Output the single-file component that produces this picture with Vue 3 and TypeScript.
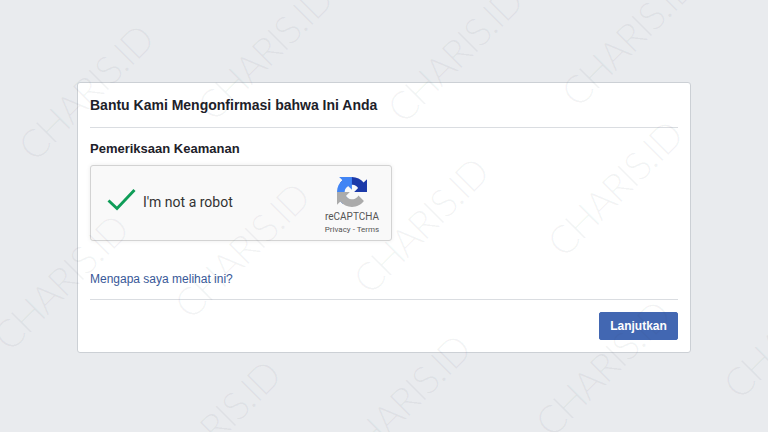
<script setup lang="ts">
const marks = [
  { x: 85, y: 92 }, { x: 264, y: 52 }, { x: 454, y: 54 }, { x: 628, y: 38 },
  { x: 60, y: 282 }, { x: 241, y: 250 }, { x: 420, y: 225 }, { x: 614, y: 188 },
  { x: 212, y: 428 }, { x: 402, y: 402 }, { x: 602, y: 368 }, { x: 790, y: 330 },
]
</script>

<template>
  <main class="page">
    <section class="card">
      <h1 class="title">Bantu Kami Mengonfirmasi bahwa Ini Anda</h1>
      <div class="body">
        <h2 class="label">Pemeriksaan Keamanan</h2>
        <div class="captcha">
          <svg class="check" viewBox="0 0 30 24" width="30" height="24">
            <path d="M1.5 12.5 L10 20.5 L27.5 2" fill="none" stroke="#0f9d58" stroke-width="2.9" />
          </svg>
          <span class="robot">I'm not a robot</span>
          <div class="brand">
            <svg class="logo" viewBox="0 0 64 64" width="30" height="30">
              <path fill="#1c3aa9" d="M64 31.955l-.033-1.37V4.687l-7.16 7.16C50.948 4.674 42.033.093 32.05.093c-10.4 0-19.622 4.96-25.458 12.64l11.736 11.86a15.55 15.55 0 0 1 4.754-5.334c2.05-1.6 4.952-2.906 8.968-2.906.485 0 .86.057 1.135.163 4.976.393 9.288 3.14 11.828 7.124l-8.307 8.307 32.285.001" />
              <path fill="#4285f4" d="M31.862 0l-1.37.033H4.594l7.16 7.16C4.58 13.052 0 21.967 0 31.95c0 10.4 4.96 19.622 12.64 25.458l11.86-11.736a15.55 15.55 0 0 1-5.334-4.754c-1.6-2.05-2.906-4.952-2.906-8.968 0-.485.057-.86.163-1.135.393-4.976 3.14-9.288 7.124-11.828l8.307 8.307L31.862 0" />
              <path fill="#ababab" d="M.001 32l.033 1.37v25.898l7.16-7.16c5.86 7.173 14.775 11.754 24.76 11.754 10.4 0 19.622-4.96 25.458-12.64l-11.736-11.86a15.55 15.55 0 0 1-4.754 5.334c-2.05 1.6-4.952 2.906-8.968 2.906-.485 0-.86-.057-1.135-.163-4.976-.393-9.288-3.14-11.828-7.124l8.307-8.307L.001 32" />
            </svg>
            <div class="brand-name">reCAPTCHA</div>
            <div class="brand-links">Privacy - Terms</div>
          </div>
        </div>
        <a class="why">Mengapa saya melihat ini?</a>
      </div>
      <footer class="foot">
        <button class="next">Lanjutkan</button>
      </footer>
    </section>
    <div class="marks">
      <span
        v-for="m in marks"
        :key="m.x + '-' + m.y"
        class="mark"
        :style="{ left: m.x + 'px', top: m.y + 'px' }"
      >CHARIS.ID</span>
    </div>
  </main>
</template>

<style scoped>
.page {
  width: 768px;
  height: 432px;
  padding-top: 82px;
  box-sizing: border-box;
  background: #e9ebee;
  font-family: "Liberation Sans", Arial, sans-serif;
  position: relative;
  overflow: hidden;
}
.card {
  width: 614px;
  height: 271px;
  box-sizing: border-box;
  margin: 0 auto;
  background: #fff;
  border: 1px solid #ccd0d5;
  border-radius: 3px;
  padding: 0 12px;
  display: flex;
  flex-direction: column;
}
.title {
  margin: 0;
  height: 44px;
  line-height: 44px;
  font-size: 14px;
  font-weight: bold;
  color: #1d2129;
  border-bottom: 1px solid #dadde1;
  box-sizing: content-box;
}
.body {
  flex: 1;
  display: flex;
  flex-direction: column;
}
.label {
  margin: 13px 0 8px;
  font-size: 13px;
  line-height: 16px;
  font-weight: bold;
  color: #1d2129;
}
.captcha {
  width: 302px;
  height: 76px;
  box-sizing: border-box;
  background: #f9f9f9;
  border: 1px solid #d3d3d3;
  border-radius: 3px;
  box-shadow: 0 0 4px rgba(0, 0, 0, 0.08);
  display: flex;
  align-items: center;
  padding: 0 7px 0 16px;
}
.check {
  flex: none;
  margin-bottom: 6px;
}
.robot {
  margin-left: 6px;
  margin-bottom: 2px;
  font-family: Roboto, sans-serif;
  font-size: 14px;
  color: #333;
  flex: 1;
}
.brand {
  width: 64px;
  display: flex;
  flex-direction: column;
  align-items: center;
  padding-top: 6px;
  font-family: Roboto, sans-serif;
  color: #555;
}
.brand-name {
  margin-top: 4px;
  font-size: 10px;
  line-height: 12px;
}
.brand-links {
  margin-top: 2px;
  font-size: 8px;
  line-height: 10px;
}
.why {
  margin-top: 30px;
  font-size: 12px;
  line-height: 16px;
  color: #385898;
}
.foot {
  height: 53px;
  box-sizing: border-box;
  border-top: 1px solid #dadde1;
  display: flex;
  justify-content: flex-end;
  padding-top: 12px;
}
.next {
  width: 79px;
  height: 28px;
  padding: 0;
  border: 1px solid #4267b2;
  border-radius: 2px;
  background: #4267b2;
  color: #fff;
  font-family: inherit;
  font-size: 12px;
  font-weight: bold;
}
.marks {
  position: absolute;
  inset: 0;
  pointer-events: none;
}
.mark {
  position: absolute;
  transform: translate(-50%, -50%) rotate(-45deg);
  font-family: Lato, sans-serif;
  font-weight: 300;
  font-size: 39px;
  letter-spacing: -1.5px;
  color: rgba(60, 70, 90, 0.06);
  white-space: nowrap;
}
</style>

<style>
html, body {
  background: #e9ebee;
}
</style>
